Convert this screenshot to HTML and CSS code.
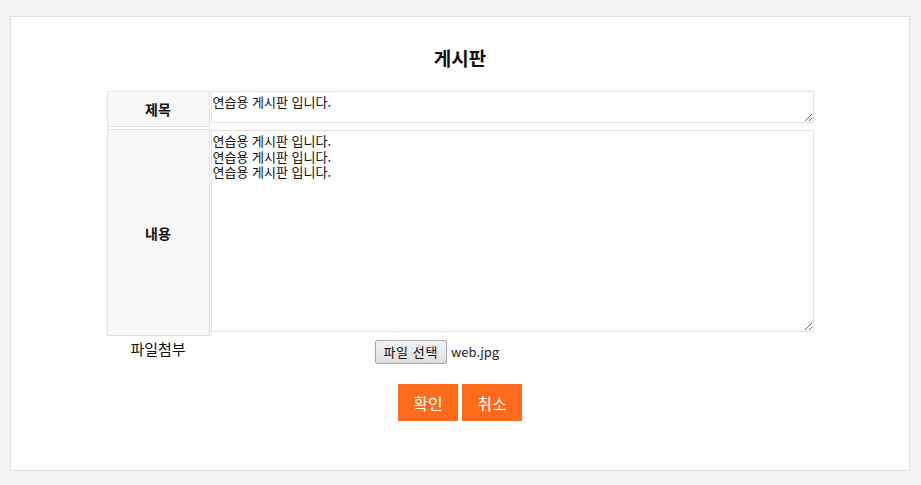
FILE: index.html
```html
<!DOCTYPE html>
<html lang="ko">
<head>
<meta charset="utf-8">
<title>게시판</title>
<link rel="stylesheet" href="styles.css">
</head>
<body>
<div class="panel">
  <h2 class="title">게시판</h2>
  <form class="board-form">
    <table class="board-table">
      <tr class="row-subject">
        <th class="label">제목</th>
        <td class="field"><textarea class="input subject">연습용 게시판 입니다.</textarea></td>
      </tr>
      <tr class="row-content">
        <th class="label">내용</th>
        <td class="field"><textarea class="input content">연습용 게시판 입니다.
연습용 게시판 입니다.
연습용 게시판 입니다.</textarea></td>
      </tr>
      <tr class="row-file">
        <td class="file-label">파일첨부</td>
        <td class="file-field">
          <span class="file-input">
            <span class="file-btn">파일 선택</span>
            <span class="file-name">web.jpg</span>
          </span>
        </td>
      </tr>
    </table>
    <div class="actions">
      <button type="button" class="btn">확인</button>
      <button type="button" class="btn">취소</button>
    </div>
  </form>
</div>
</body>
</html>
```

FILE: styles.css
```css
html, body {
  margin: 0;
  padding: 0;
}
body {
  background: #f3f3f3;
  font-family: "Noto Sans CJK KR", "Noto Sans", sans-serif;
  color: #111;
  padding: 16px 11px 0 10px;
  height: 485px;
  box-sizing: border-box;
}
.panel {
  box-sizing: border-box;
  width: 900px;
  height: 455px;
  background: #fff;
  border: 1px solid #e0e0e0;
  padding-top: 29px;
}
.title {
  margin: 0 0 19px;
  text-align: center;
  font-size: 19px;
  line-height: 24px;
  font-weight: bold;
  color: #111;
}
.board-table {
  margin: 0 auto;
  width: 711px;
  border-collapse: separate;
  border-spacing: 2px;
}
.label {
  box-sizing: border-box;
  width: 103px;
  background: #f8f8f8;
  border: 1px solid #e2e2e2;
  font-size: 14px;
  font-weight: bold;
  color: #111;
  padding: 0;
  text-align: center;
  vertical-align: middle;
}
.row-subject .label { height: 36px; }
.row-content .label { height: 207px; }
.field {
  padding: 0;
  vertical-align: top;
}
.input {
  display: block;
  box-sizing: border-box;
  width: 603px;
  margin: 0 0 0 -1px;
  border: 1px solid #e0e0e0;
  padding: 2px 1px 2px 1px;
  font-family: "Noto Sans CJK KR", "Noto Sans", sans-serif;
  font-size: 13px;
  line-height: 15.5px;
  color: #111;
  background: #fff;
  outline: none;
}
.subject { height: 32px; }
.content { height: 202px; margin-top: 1px; }
.file-label {
  padding: 0;
  text-align: center;
  vertical-align: top;
  font-size: 15px;
  line-height: 22px;
  height: 26px;
  color: #111;
}
.file-field {
  padding: 2px 0 0;
  text-align: center;
  vertical-align: top;
  font-size: 0;
  line-height: 0;
}
.file-input {
  display: inline-flex;
  align-items: center;
  width: 276px;
  text-align: left;
  gap: 4px;
}
.file-btn {
  box-sizing: border-box;
  display: inline-block;
  height: 24px;
  padding: 0 8px;
  border: 1px solid #a6a6a6;
  border-radius: 2px;
  background: linear-gradient(#f4f4f4, #dedede);
  font-size: 13px;
  line-height: 21px;
  letter-spacing: 0.6px;
  color: #111;
  white-space: nowrap;
}
.file-name {
  font-size: 13px;
  line-height: 24px;
  color: #222;
}
.actions {
  margin-top: 18px;
  text-align: center;
  font-size: 0;
}
.btn {
  width: 60px;
  height: 37px;
  margin: 0 2px;
  border: 0;
  padding: 0;
  background: #ff6b1a;
  color: #fff;
  font-family: "Noto Sans CJK KR", "Noto Sans", sans-serif;
  font-size: 16px;
  cursor: pointer;
}
```
